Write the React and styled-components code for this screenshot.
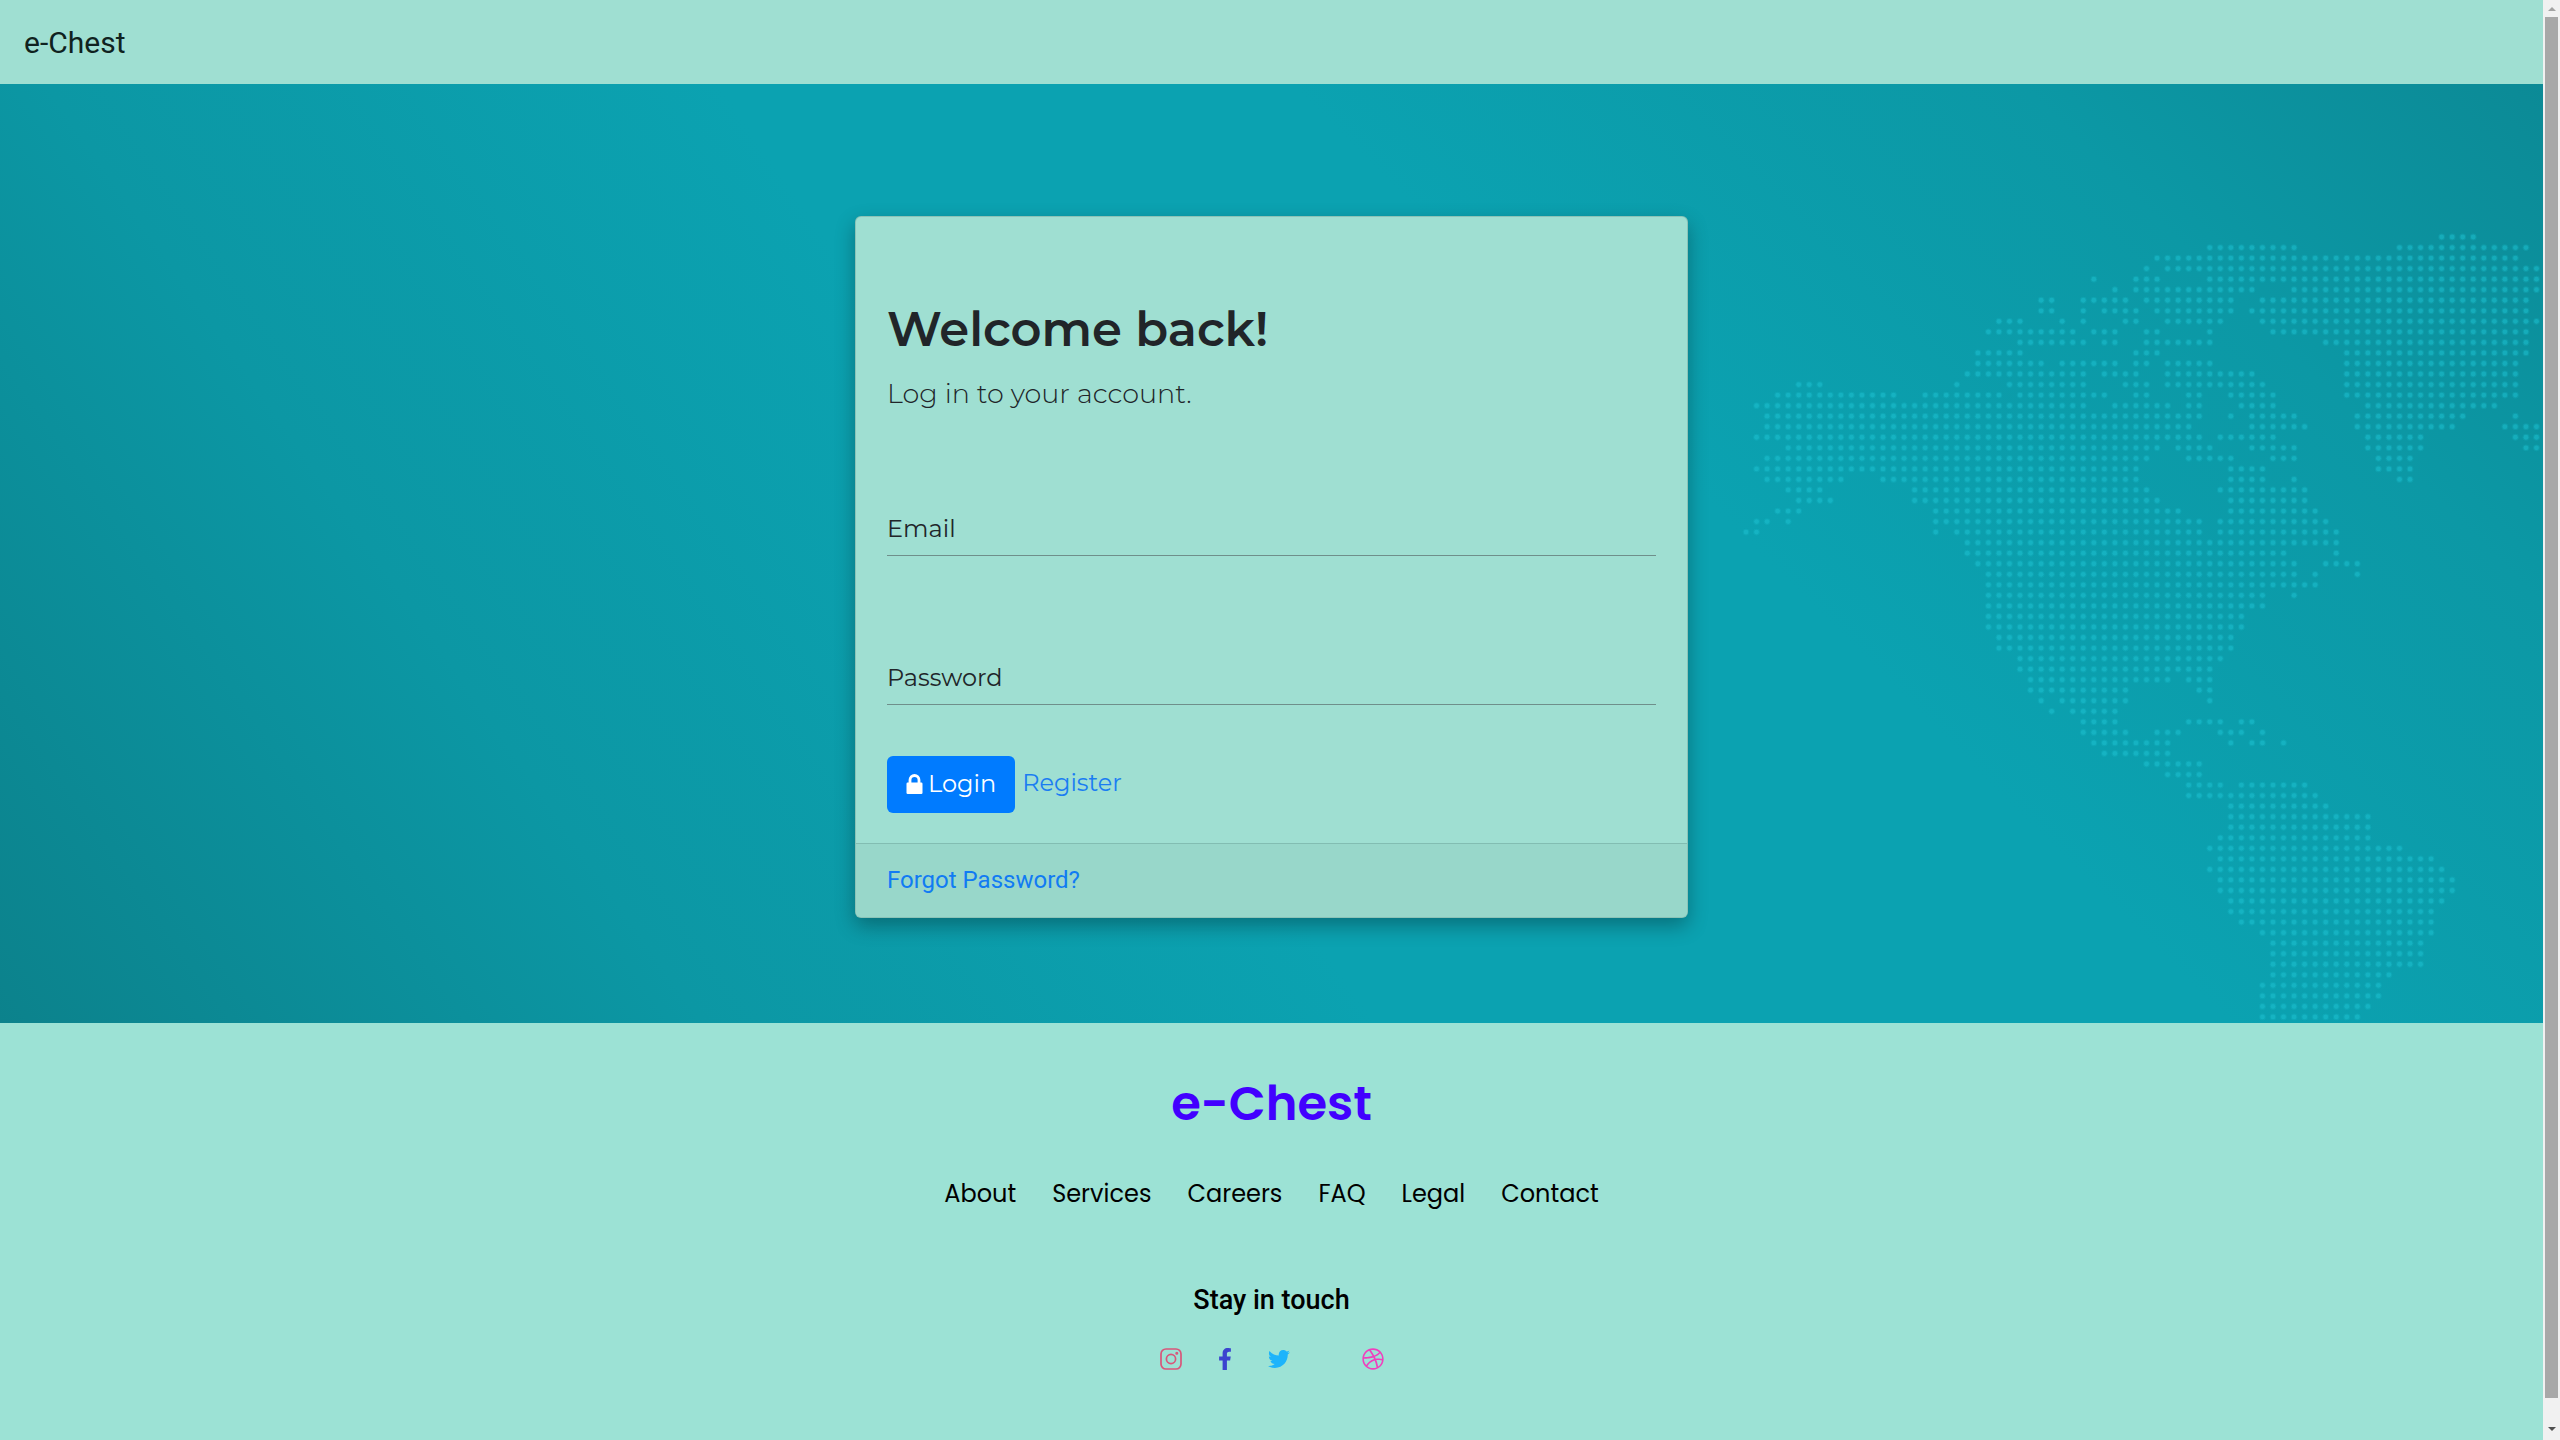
import React from "react";
import styled, { createGlobalStyle } from "styled-components";
import { FaTwitter, FaFacebookF, FaDribbble } from "react-icons/fa";

const GlobalStyle = createGlobalStyle`
  *, *::before, *::after { box-sizing: border-box; }
  body {
    margin: 0;
    background: #9ce2d5;
    color: #212529;
    font: 400 24px/36px Roboto, "Liberation Sans", sans-serif;
  }
  a { text-decoration: none; }
`;

const rounded = `Montserrat, Inter, "Open Sans", sans-serif`;

const Shell = styled.div`
  display: flex;
  height: 100vh;
  overflow: hidden;
`;

const Page = styled.div`
  flex: 1;
  min-width: 0;
  display: flex;
  flex-direction: column;
  background: #9ce2d5;
`;

const Navbar = styled.header`
  display: flex;
  align-items: center;
  flex: none;
  padding: 21px 24px 19px;
  background: #9fdfd2;
`;

const Brand = styled.a`
  color: #0f2220;
  font-size: 30px;
  line-height: 44px;
`;

const Hero = styled.main`
  flex: none;
  display: grid;
  grid-template-columns: 1fr minmax(0, 833px) 1fr;
  background:
    linear-gradient(225deg, #0c8a96 0%, #0c98a5 15%, rgba(11, 162, 177, 0) 36%),
    linear-gradient(55deg, #0c828c 0%, #0c97a4 22%, #0ba2b1 43%);
`;

const Card = styled.section`
  grid-column: 2;
  margin: 132px 0 105px;
  border: 1px solid rgba(0, 0, 0, 0.125);
  border-radius: 6px;
  background: #9fdfd2;
  box-shadow: 0 8px 20px rgba(0, 0, 0, 0.3);
  overflow: hidden;
`;

const CardBody = styled.form`
  padding: 82px 31px 30px;
  font-family: ${rounded};
`;

const Title = styled.h1`
  margin: 0;
  font-size: 48px;
  line-height: 60px;
  font-weight: 600;
`;

const Lead = styled.p`
  margin: 15px 0 81px;
  font-size: 27px;
  line-height: 40px;
  font-weight: 300;
`;

const Field = styled.div`
  display: grid;
  height: 61px;
  margin-bottom: ${(p) => (p.$last ? "51px" : "88px")};
  > * { grid-area: 1 / 1; }
`;

const FieldLabel = styled.label`
  align-self: end;
  padding-bottom: 9px;
  pointer-events: none;
  z-index: 1;
`;

const FieldInput = styled.input`
  width: 100%;
  min-width: 0;
  padding: 0;
  border: 0;
  border-bottom: 1px solid #6f8f8b;
  background: transparent;
  color: inherit;
  font: inherit;
  outline: none;
`;

const Actions = styled.div`
  display: flex;
  align-items: center;
  gap: 7px;
`;

const LoginButton = styled.button`
  display: flex;
  align-items: center;
  gap: 5px;
  height: 57px;
  padding: 0 19px 2px;
  border: 0;
  border-radius: 6px;
  background: #007bff;
  color: #fff;
  font: inherit;
  svg { display: block; width: 17px; height: 20px; }
`;

const RegisterLink = styled.a`
  padding-bottom: 3px;
  color: #1a7df2;
`;

const CardFooter = styled.div`
  padding: 18px 31px 19px;
  border-top: 1px solid #82bdb2;
  background: #98d7ca;
  a { color: #117bf3; }
`;

const HeroSide = styled.div`
  grid-column: 3;
  display: flex;
  justify-content: flex-end;
  align-items: flex-end;
  min-width: 0;
  svg { display: block; flex: none; }
`;

const Footer = styled.footer`
  flex: 1;
  display: flex;
  flex-direction: column;
  align-items: center;
  padding-top: 51px;
  color: #000;
`;

const FooterBrand = styled.h2`
  margin: 0 0 42px;
  color: #4200ff;
  font: 600 48px/60px Poppins, Inter, sans-serif;
`;

const FooterNav = styled.nav`
  display: flex;
  gap: 36px;
  margin-bottom: 68px;
  font-family: Poppins, Inter, sans-serif;
  a { color: #000; }
`;

const FooterHeading = styled.h3`
  margin: 0 0 28px;
  font-size: 27px;
  line-height: 40px;
  font-weight: 500;
`;

const Socials = styled.div`
  display: flex;
  align-items: center;
  gap: 32px;
`;

const SocialLink = styled.a`
  display: block;
  margin-left: ${(p) => (p.$apart ? "40px" : "0")};
  color: ${(p) => p.$color};
  svg { display: block; width: 22px; height: 22px; }
`;

const Scrollbar = styled.div`
  flex: none;
  width: 17px;
  display: flex;
  flex-direction: column;
  align-items: center;
  justify-content: space-between;
  padding: 7px 2px 9px;
  background: #f1f1f1;
`;

const Arrow = styled.span`
  border: 4px solid transparent;
  ${(p) =>
    p.$down
      ? "border-top-color: #505050; border-bottom: 0;"
      : "border-bottom-color: #a3a3a3; border-top: 0;"}
`;

const Thumb = styled.span`
  flex: 1;
  align-self: stretch;
  margin: 6px 0 29px;
  background: #a8a8a8;
`;

// Dotted world map: one line per row of dots, each "start-end" pair a run of columns.
const MAP_ROWS = `66-69
44-52 62-74
39-73
38 40-75
33 37-39 44-75
35 37-48 52-75
28-29 32-36 38-46 49-74
28-29 32 34-37 39-46 48-74
24-26 30 32 36-37 40-45 49-75
23-31 33-35 38-39 44 50-74
26-32 34-35 38-44 55-74
22-26 37-39 57-74
22-28 30-35 37-38 40-44 57-73
21-32 34-37 40-48 57-73
5-7 20 25-32 36-38 40-49 57-73
3-14 17-24 26-34 37-38 42-43 46-50 57-73
1-32 35-40 42-43 47-50 59-71
2-43 46 48-52 58-68 73
2-42 48-53 58-67 72-75
1-43 45-50 59-64 73-75
4-39 41-44 48-52 59-64 74-75
2-38 42-46 50-52 60-63
1-37 46-49 60-63
2-9 13-37 46-49 52 62-63
4-7 16-38 45-53
5-8 16-39 46-53
3-5 18-41 46-54
1-2 4 18-43 45-55
0-1 18 20-43 45-56
21-56
21-51 56
22-52 55-58
23-52 54 58
23-54
23-49 52
23-49
23-47
23-47
24-46
24-46
26-45
26-44
27-40 42-44
27-36 43-44
28 30-36 44
29 31-35
32-35 42-45 47-48
32-36 39-41 45-47 49
33-40 46 48-49 51
34-40
38-43
40-43
42-45 47-53
42-54
46-55
46-59
46-59
45-59
44-62
45-65
44-66
45-67
45-67
46-66
46-65
47-65
49-65
50-64
50-64
50-64
50-61
49-60
49-60
49-59
49-58`.split("\n");

const STEP = 10.54;
const DOTS = MAP_ROWS.flatMap((row, r) =>
  row.split(" ").flatMap((run) => {
    const [a, b = a] = run.split("-").map(Number);
    return Array.from({ length: b - a + 1 }, (_, i) => [
      (6 + (a + i) * STEP).toFixed(2),
      (7 + r * STEP).toFixed(2),
    ]);
  })
);

function WorldMap() {
  return (
    <svg width="803" height="793" viewBox="0 0 803 793" aria-hidden="true">
      <g fill="#1fc4d4" fillOpacity="0.2">
        {DOTS.map(([x, y]) => (
          <circle key={`${x}-${y}`} cx={x} cy={y} r="3.4" />
        ))}
      </g>
      <g fill="#1fc4d4" fillOpacity="0.42">
        {DOTS.map(([x, y]) => (
          <circle key={`${x}-${y}`} cx={x} cy={y} r="2.4" />
        ))}
      </g>
    </svg>
  );
}

function LockIcon() {
  return (
    <svg viewBox="0 0 17 20" aria-hidden="true">
      <rect x="0.5" y="8.5" width="16" height="11.5" rx="1.2" fill="currentColor" />
      <path d="M4 9.5V6a4.5 4.5 0 0 1 9 0v3.5" fill="none" stroke="currentColor" strokeWidth="2.8" />
    </svg>
  );
}

function InstagramIcon() {
  return (
    <svg viewBox="0 0 22 22" fill="none" stroke="currentColor" strokeWidth="1.7">
      <rect x="1" y="1" width="20" height="20" rx="5" />
      <circle cx="11" cy="11" r="4.6" />
      <circle cx="16.8" cy="5.2" r="0.7" />
    </svg>
  );
}

const LINKS = ["About", "Services", "Careers", "FAQ", "Legal", "Contact"];

export default function App() {
  return (
    <>
      <GlobalStyle />
      <Shell>
        <Page>
          <Navbar>
            <Brand href="#">e-Chest</Brand>
          </Navbar>
          <Hero>
            <Card>
              <CardBody onSubmit={(e) => e.preventDefault()}>
                <Title>Welcome back!</Title>
                <Lead>Log in to your account.</Lead>
                <Field>
                  <FieldLabel htmlFor="email">Email</FieldLabel>
                  <FieldInput id="email" type="email" />
                </Field>
                <Field $last>
                  <FieldLabel htmlFor="password">Password</FieldLabel>
                  <FieldInput id="password" type="password" />
                </Field>
                <Actions>
                  <LoginButton type="submit">
                    <LockIcon />
                    Login
                  </LoginButton>
                  <RegisterLink href="#">Register</RegisterLink>
                </Actions>
              </CardBody>
              <CardFooter>
                <a href="#">Forgot Password?</a>
              </CardFooter>
            </Card>
            <HeroSide>
              <WorldMap />
            </HeroSide>
          </Hero>
          <Footer>
            <FooterBrand>e-Chest</FooterBrand>
            <FooterNav>
              {LINKS.map((l) => (
                <a href="#" key={l}>{l}</a>
              ))}
            </FooterNav>
            <FooterHeading>Stay in touch</FooterHeading>
            <Socials>
              <SocialLink href="#" aria-label="Instagram" $color="#d9567a"><InstagramIcon /></SocialLink>
              <SocialLink href="#" aria-label="Facebook" $color="#3b44cf"><FaFacebookF /></SocialLink>
              <SocialLink href="#" aria-label="Twitter" $color="#1db4fb"><FaTwitter /></SocialLink>
              <SocialLink href="#" aria-label="Dribbble" $color="#f03fbd" $apart><FaDribbble /></SocialLink>
            </Socials>
          </Footer>
        </Page>
        <Scrollbar aria-hidden="true">
          <Arrow />
          <Thumb />
          <Arrow $down />
        </Scrollbar>
      </Shell>
    </>
  );
}
